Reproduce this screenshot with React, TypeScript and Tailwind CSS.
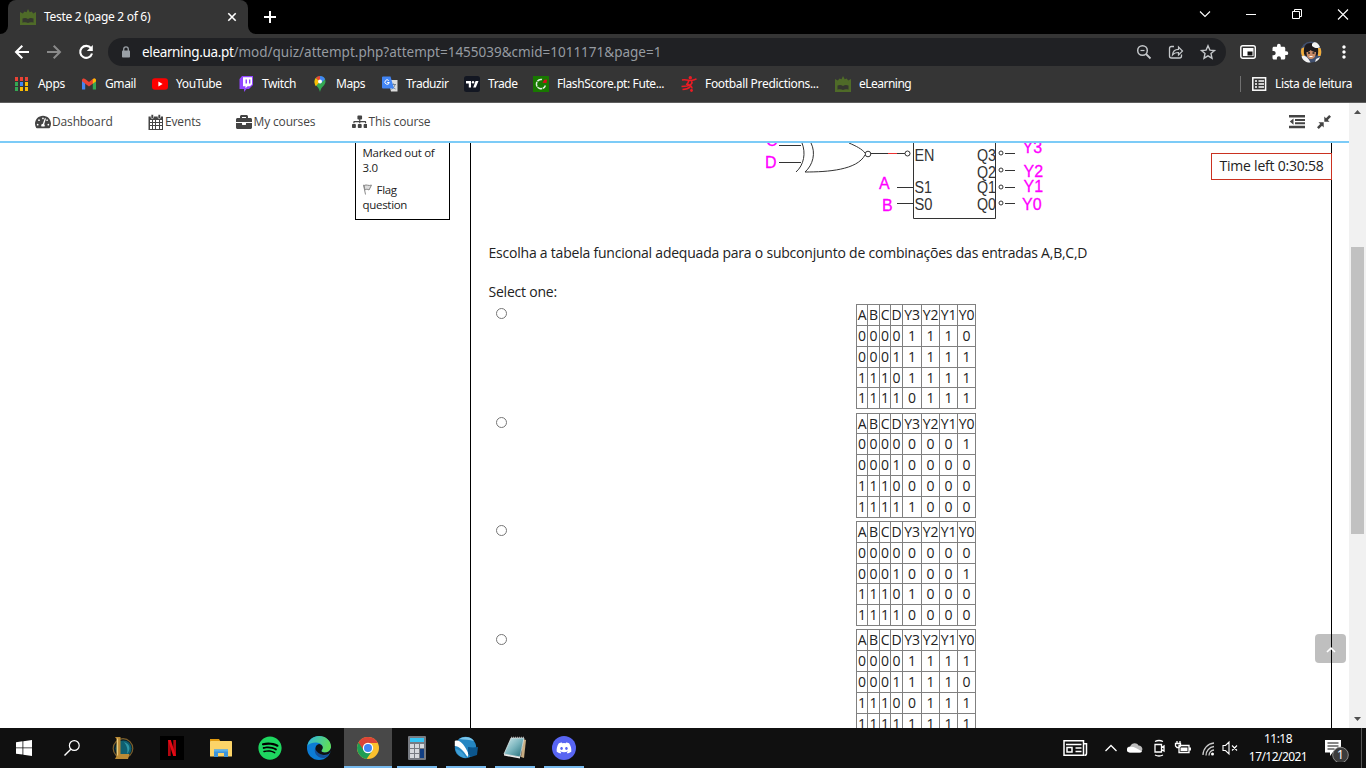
import React from "react";
import {
  FaTachometerAlt,
  FaBriefcase,
  FaSitemap,
  FaSpotify,
  FaDiscord,
} from "react-icons/fa";
import { MdExtension, MdMoreVert } from "react-icons/md";

const UaLogo = () => (
  <svg width="16" height="16" viewBox="0 0 16 16">
    <path d="M0 3l2.800 1.500L4.500 2.500l2 .8L8 0l1.700 3.300 2-.8 1.500 2L16 3v13H0z" fill="#4f6b28" />
    <path d="M2.500 9.500c2-.9 4-.7 5.500.4 1.500-1.100 3.500-1.300 5.500-.4v4.200c-2-.6-4-.5-5.500.3-1.500-.8-3.500-.9-5.500-.3z" fill="#35372f" />
  </svg>
);

const AppsIcon = () => (
  <svg width="16" height="16" viewBox="0 0 16 16" shapeRendering="crispEdges">
    {["#ea4335", "#ea4335", "#ea4335", "#34a853", "#4285f4", "#fbbc04", "#34a853", "#fbbc04", "#fbbc04"].map((c, i) => (
      <rect key={i} x={1 + (i % 3) * 5} y={1 + Math.floor(i / 3) * 5} width="3" height="4" fill={c} />
    ))}
  </svg>
);

const GmailIcon = () => (
  <svg width="16" height="16" viewBox="0 0 16 16">
    <path d="M1 4v9.500h3.200V7z" fill="#4285f4" />
    <path d="M15 4v9.500h-3.200V7z" fill="#34a853" />
    <path d="M1 4.200C1 2.500 3 2 4.200 3L8 6l3.800-3C13 2 15 2.500 15 4.200v1L8 10.500 1 5.200z" fill="#ea4335" />
    <path d="M11.800 3C13 2 15 2.500 15 4.200v1l-3.200 2.500z" fill="#fbbc04" />
  </svg>
);

const YoutubeIcon = () => (
  <svg width="16" height="16" viewBox="0 0 16 16">
    <rect x="0" y="2.300" width="16" height="11.500" rx="3" fill="#f00" />
    <path d="M6.400 5.600v4.900L10.600 8z" fill="#fff" />
  </svg>
);

const TwitchIcon = () => (
  <svg width="16" height="16" viewBox="0 0 16 16">
    <path d="M4 0h11v9l-4 4H8.500L6 16v-3H1.500V3z" fill="#9146ff" />
    <path d="M5 1.200h9v7l-2 2H9.500l-2 2v-2H5z" fill="#fff" />
    <path d="M7.500 3.500H9v4H7.500zM11 3.500h1.400v4H11z" fill="#9146ff" />
  </svg>
);

const MapsIcon = () => (
  <svg width="16" height="16" viewBox="0 0 16 16">
    <path d="M2.500 5.500a5.500 5.500 0 0 1 11 0c0 4-4.500 5-5.500 10.500-1-5.500-5.500-6.500-5.500-10.500z" fill="#34a853" />
    <path d="M2.500 5.500a5.500 5.500 0 0 1 1.300-3.500L8 5.500l-4.200 4.800C3 9 2.500 7.500 2.500 5.500z" fill="#fbbc04" />
    <path d="M3.800 2A5.500 5.500 0 0 1 8 0v5.500z" fill="#ea4335" />
    <path d="M8 0a5.500 5.500 0 0 1 5 3.300L8 8z" fill="#4285f4" />
    <circle cx="8" cy="5.500" r="2" fill="#fff" />
  </svg>
);

const TranslateIcon = () => (
  <svg width="16" height="16" viewBox="0 0 16 16">
    <path d="M6 4h9.500v11.500H9z" fill="#dcdcdc" />
    <path d="M9 8.500h5M11.500 7.500v1M13 8.500c-.5 2.500-2 4-3.500 4.800M10 9c.5 2 2 3.500 3.500 4" stroke="#6b7b8c" strokeWidth=".9" fill="none" />
    <path d="M1 .5h7.500l3.500 12H1A1 1 0 0 1 0 11.500v-10A1 1 0 0 1 1 .5z" fill="#4285f4" />
    <path d="M6.800 4.600A2.200 2.200 0 1 0 7.300 6.500H5.200" stroke="#fff" strokeWidth="1" fill="none" />
  </svg>
);

const TradeIcon = () => (
  <svg width="16" height="16" viewBox="0 0 16 16">
    <rect width="16" height="16" rx="2.500" fill="#131722" />
    <path d="M2 5h5v6.500H4.800V7.500H2zM11.600 5H14.500l-2.700 6.500H9.200z" fill="#fff" />
    <circle cx="9" cy="6.200" r="1.200" fill="#fff" />
  </svg>
);

const FlashIcon = () => (
  <svg width="16" height="16" viewBox="0 0 16 16">
    <rect width="16" height="16" fill="#187800" />
    <path d="M9 3.600A4.600 4.600 0 1 0 12.400 9.500" stroke="#dfeedd" strokeWidth="1.500" fill="none" strokeDasharray="5 .6" />
    <path d="M9.500 6.700l1.800-3 2.700-.2-.5 3.500z" fill="#d80b1b" />
  </svg>
);

const FootballIcon = () => (
  <svg width="16" height="16" viewBox="0 0 16 16">
    <circle cx="9.300" cy="1.700" r="1.700" fill="#ed1c24" />
    <path d="M1 4c4-1 7 .8 9 .5s3-.8 5.500-1.500M7.800 4.500L6.500 8M10.500 4.500c1.500 3-.5 4.500-4.500 5.500M5 8C8 9 11 9 11 12.500M6 10L.5 10.500M1.500 13.500c4 0 6-1 8-3" stroke="#ed1c24" strokeWidth="1.600" fill="none" />
    <circle cx="10.500" cy="14.500" r="1.400" fill="#ed1c24" />
  </svg>
);

const bookmarks = [
  { w: "w-[67px]", label: "Apps", t: "tracking-[-0.300px]", icon: <AppsIcon /> },
  { w: "w-[71px]", label: "Gmail", t: "tracking-[-0.400px]", icon: <GmailIcon /> },
  { w: "w-[86px]", label: "YouTube", t: "tracking-[-0.400px]", icon: <YoutubeIcon /> },
  { w: "w-[74px]", label: "Twitch", t: "tracking-[-0.400px]", icon: <TwitchIcon /> },
  { w: "w-[70px]", label: "Maps", t: "tracking-[-0.400px]", icon: <MapsIcon /> },
  { w: "w-[82px]", label: "Traduzir", t: "tracking-[-0.450px]", icon: <TranslateIcon /> },
  { w: "w-[69px]", label: "Trade", t: "tracking-[-0.400px]", icon: <TradeIcon /> },
  { w: "w-[148px]", label: "FlashScore.pt: Fute...", t: "tracking-[-0.400px]", icon: <FlashIcon /> },
  { w: "w-[154px]", label: "Football Predictions...", t: "tracking-[-0.320px]", icon: <FootballIcon /> },
  { w: "w-[90px]", label: "eLearning", t: "tracking-[-0.520px]", icon: <UaLogo /> },
];

const TabStrip = () => (
  <div className="flex h-[34px] bg-black">
    <div className="flex w-[8px] items-end bg-[#353535]">
      <div className="h-[34px] w-[8px] rounded-br-[8px] bg-black" />
    </div>
    <div className="flex w-[240px] items-center rounded-t-[8px] bg-[#353535] pl-[12px]">
      <UaLogo />
      <span className="ml-[8px] w-[183px] whitespace-nowrap text-[12px] tracking-[-0.300px] text-white">Teste 2 (page 2 of 6)</span>
      <svg width="10" height="10" viewBox="0 0 10 10"><path d="M1.300 1.300l7.400 7.400M8.700 1.300L1.300 8.700" stroke="#fff" strokeWidth="1.600" /></svg>
    </div>
    <div className="h-[34px] w-[8px] bg-[#353535]">
      <div className="h-[34px] w-[8px] rounded-bl-[8px] bg-black" />
    </div>
    <svg className="ml-[8px] mt-[11px]" width="12" height="12" viewBox="0 0 12 12"><path d="M6 0v12M0 6h12" stroke="#fff" strokeWidth="2" /></svg>
    <div className="ml-auto flex w-[172px] items-start pt-[8px]">
      <svg width="172" height="14" viewBox="0 0 172 14" fill="none" stroke="#fff">
        <path d="M6 3.500l5 5 5-5" strokeWidth="1.100" />
        <path d="M52 6.500h10" />
        <path d="M98.500 3.500h7v7h-7zM100.500 3V1.500h7v7H106" />
        <path d="M144 1.500l10 10M154 1.500l-10 10" strokeWidth="1.100" />
      </svg>
    </div>
  </div>
);

const Toolbar = () => (
  <div className="flex h-[36px] items-center bg-[#353535]">
    <svg className="ml-[14px]" width="16" height="16" viewBox="0 0 16 16" fill="none" stroke="#fff" strokeWidth="2">
      <path d="M15 8H2.500M8.300 1.700L2 8l6.300 6.300" />
    </svg>
    <svg className="ml-[16px]" width="16" height="16" viewBox="0 0 16 16" fill="none" stroke="#8a8a8a" strokeWidth="2">
      <path d="M1 8h12.500M7.700 1.700L14 8l-6.300 6.300" />
    </svg>
    <svg className="ml-[16px]" width="16" height="16" viewBox="0 0 16 16" fill="none" stroke="#fff" strokeWidth="2.100">
      <path d="M13 4.200A6 6 0 1 0 14 9.500" />
      <path d="M14.800 1v6h-6z" fill="#fff" stroke="none" />
    </svg>
    <div className="ml-[14px] flex h-[28px] w-[1118px] items-center rounded-full bg-[#202124]">
      <svg className="ml-[13px]" width="10" height="12" viewBox="0 0 10 12">
        <path d="M2.700 5V3.200a2.300 2.300 0 0 1 4.600 0V5" stroke="#9aa0a6" strokeWidth="1.300" fill="none" />
        <rect x="1" y="4.500" width="8" height="7" rx=".8" fill="#9aa0a6" />
      </svg>
      <span className="ml-[11px] whitespace-nowrap text-[13.500px] text-[#969ba1]">
        <span className="tracking-[-0.350px] text-white">elearning.ua.pt</span>/mod/quiz/attempt.php?attempt=1455039&amp;cmid=1011171&amp;page=1
      </span>
      <svg className="ml-auto mr-[9px]" width="82" height="20" viewBox="0 0 82 20" fill="none" stroke="#c4c7ca" strokeWidth="1.500">
        <circle cx="7.500" cy="8.500" r="4.800" /><path d="M11 12l4.500 4.500" strokeWidth="1.800" /><path d="M5.500 8.500h4" strokeWidth="1.200" />
        <path d="M39 4.500h-2.500a2 2 0 0 0-2 2v7.500a2 2 0 0 0 2 2h8a2 2 0 0 0 2-2v-1.500" strokeWidth="1.300" />
        <path d="M37.500 13c.3-3.500 2.500-5.700 6-5.700V5l4 4-4 4v-2.500c-2.500 0-4.500.5-6 2.500z" strokeWidth="1.200" />
        <path d="M73 3.800l1.900 4.300 4.600.4-3.500 3.100 1 4.600-4-2.400-4 2.400 1-4.600-3.500-3.100 4.600-.4z" strokeWidth="1.400" />
      </svg>
    </div>
    <svg className="ml-[14px]" width="17" height="16" viewBox="0 0 17 16">
      <rect x=".8" y="1.800" width="14.500" height="12.500" rx="2" stroke="#fff" strokeWidth="1.400" fill="none" />
      <path d="M3 4h10.500v8H3z" fill="#fff" /><path d="M7.500 7.500h5v4h-5z" fill="#111" />
    </svg>
    <MdExtension className="ml-[14px]" size={18} color="#fff" />
    <svg className="ml-[11px]" width="22" height="22" viewBox="0 0 22 22">
      <circle cx="11" cy="11" r="10.500" fill="#41506e" />
      <path d="M1.500 7.500l3-1.500v10H2.500A11 11 0 0 1 1.500 7.500zM18 7h2.500a11 11 0 0 1 0 8H18z" fill="#f1ad3c" />
      <path d="M4 13C3 5 6 2 11 2s8 3 7 11l-2 2H6z" fill="#1c191c" />
      <path d="M6.500 11c2 0 3-.5 4-2 2 1.500 3.500 2 5.500 2 0 4.500-2 7-5 7s-4.500-2.500-4.500-7z" fill="#c98b66" />
      <path d="M1.500 15.500c3-2 6 0 9 6C7 22 3 20 1.500 15.500zM12 3c2-3 6-2 8 3-2 2-6 1-8-1zM16 18l4-2c-1 3-3 4-5 5z" fill="#f2f2f2" />
      <path d="M8 12h2M12.500 12h2" stroke="#222" strokeWidth="1.500" />
      <path d="M9.500 15.500h3" stroke="#fff" />
    </svg>
    <MdMoreVert className="ml-[12px]" size={20} color="#fff" />
  </div>
);

const BookmarksBar = () => (
  <div className="flex h-[33px] items-center border-b border-[#5e5e5e] bg-[#353535] pb-[4px] pl-[14px]">
    {bookmarks.map((b) => (
      <div key={b.label} className={`flex shrink-0 items-center gap-[8px] ${b.w}`}>
        <span className="shrink-0">{b.icon}</span>
        <span className={`whitespace-nowrap text-[12px] leading-[16px] text-white ${b.t}`}>{b.label}</span>
      </div>
    ))}
    <div className="ml-auto flex h-[16px] items-center border-l border-[#707070] pl-[11px] pr-[14px]">
      <svg width="15" height="14" viewBox="0 0 15 14">
        <rect x=".8" y=".8" width="12.800" height="12.400" fill="none" stroke="#fff" strokeWidth="1.500" />
        <path d="M3 4h2M3 7h2M3 10h2M6.500 4h5.500M6.500 7h5.500M6.500 10h5.500" stroke="#fff" strokeWidth="1.500" />
      </svg>
      <span className="ml-[8px] w-[77px] whitespace-nowrap text-[12px] tracking-[-0.350px] text-white">Lista de leitura</span>
    </div>
  </div>
);

const CalendarIcon = () => (
  <svg width="16" height="16" viewBox="0 0 16 16">
    <path d="M.5 2.500h14.500V16H.5z" fill="#444" />
    <path d="M2 6h2v2H2zM5 6h2v2H5zM8 6h3v2H8zM12 6h2v2h-2zM2 9h2v2H2zM5 9h2v2H5zM8 9h3v2H8zM12 9h2v2h-2zM2 12h2v3H2zM5 12h2v3H5zM8 12h3v3H8zM12 12h2v3h-2z" fill="#fff" />
    <rect x="3" y=".5" width="2.500" height="4" rx="1" fill="#444" stroke="#fff" strokeWidth=".6" />
    <rect x="10" y=".5" width="2.500" height="4" rx="1" fill="#444" stroke="#fff" strokeWidth=".6" />
  </svg>
);

const NavItem = ({ w, icon, label }: { w: string; icon: React.ReactNode; label: string }) => (
  <div className={`flex shrink-0 items-center gap-[1.500px] ${w}`}>
    {icon}
    <span className="whitespace-nowrap">{label}</span>
  </div>
);

const SiteNav = () => (
  <div className="flex h-[40px] shrink-0 items-center border-b-2 border-[#7ccbf7] pl-[34.500px] text-[12px] tracking-[-0.150px] text-[#444]">
    <NavItem w="w-[113px]" icon={<FaTachometerAlt size={16} color="#444" />} label="Dashboard" />
    <NavItem w="w-[88.500px]" icon={<CalendarIcon />} label="Events" />
    <NavItem w="w-[115.500px]" icon={<FaBriefcase size={16} color="#444" />} label="My courses" />
    <NavItem w="w-[100px]" icon={<FaSitemap size={15.5} color="#444" />} label="This course" />
    <svg className="ml-auto" width="16" height="14" viewBox="0 0 16 14"><path d="M0 0h16v2.400H0zM6 3.900h10v2H6zM6 7.300h10v2H6zM0 10.700h16v2.500H0zM4.500 3.500v6.200L.8 6.600z" fill="#444" /></svg>
    <svg className="ml-[12px] mr-[18px]" width="14" height="14" viewBox="0 0 14 14">
      <path d="M7.300 6.700V1.500l1.700 1.700L12.200 0 14 1.800 10.800 5l1.700 1.700zM6.700 7.300v5.200L5 10.800 1.800 14 0 12.200 3.200 9 1.500 7.300z" fill="#444" />
    </svg>
  </div>
);

const Circuit = () => (
  <svg width="290" height="78" viewBox="760 143 290 78" fontFamily="Liberation Sans, sans-serif" className="ml-[289px] block">
    <g stroke="#333" fill="none" strokeWidth="1">
      <path d="M779 145.500h22M779 162.500h22" />
      <path d="M802 143c4 10 2 22-6 29M811 143c5 10 2 22-6 29 23 0 52-2 60-17M849 143c7 3 13 6 16 10" />
      <circle cx="868" cy="154" r="2.800" /><circle cx="907.500" cy="153.500" r="2.500" />
      <path d="M871 153.500h17M897 153.500h8M897 187.500h16M897 203.500h16M913.500 143v75.500h82V143" />
      {[153.5, 170.5, 187.5, 203.5].map((y) => (
        <g key={y}><circle cx="1001" cy={y - 0.5} r="2" /><path d={`M1005 ${y}h10`} /></g>
      ))}
    </g>
    <path d="M888 153.500h9" stroke="#e33" />
    <g fill="#333" fontSize="16">
      <text x="914.500" y="161" textLength="20" lengthAdjust="spacingAndGlyphs">EN</text>
      <text x="914.500" y="193" textLength="17.500" lengthAdjust="spacingAndGlyphs">S1</text>
      <text x="914.500" y="210" textLength="18" lengthAdjust="spacingAndGlyphs">S0</text>
      <text x="977" y="161" textLength="19" lengthAdjust="spacingAndGlyphs">Q3</text>
      <text x="977" y="178" textLength="19" lengthAdjust="spacingAndGlyphs">Q2</text>
      <text x="977" y="193" textLength="19" lengthAdjust="spacingAndGlyphs">Q1</text>
      <text x="977" y="210" textLength="19" lengthAdjust="spacingAndGlyphs">Q0</text>
    </g>
    <g fill="#f0f" stroke="#f0f" strokeWidth=".3" fontSize="16">
      <text x="766" y="146">C</text>
      <text x="765" y="168">D</text>
      <text x="879" y="189">A</text>
      <text x="882" y="211">B</text>
      <text x="1022.500" y="152.500">Y3</text>
      <text x="1023.500" y="177">Y2</text>
      <text x="1023.500" y="192">Y1</text>
      <text x="1022" y="210">Y0</text>
    </g>
  </svg>
);

const headers = ["A", "B", "C", "D", "Y3", "Y2", "Y1", "Y0"];
const options = [
  { box: "h-[109px]", radio: "mt-[4px]", rows: "grid-rows-[21px_21px_21px_20px_22px]", data: ["00001110", "00011111", "11101111", "11110111"] },
  { box: "h-[108px]", radio: "mt-[4px]", rows: "grid-rows-[20px_21px_21px_21px_22px]", data: ["00000001", "00010000", "11100000", "11111000"] },
  { box: "h-[108px]", radio: "mt-[4px]", rows: "grid-rows-[21px_21px_20px_21px_22px]", data: ["00000000", "00010001", "11101000", "11110000"] },
  { box: "h-[108px]", radio: "mt-[5px]", rows: "grid-rows-[21px_21px_21px_21px_22px]", data: ["00001111", "00011110", "11100111", "11111111"] },
];

const TruthTable = ({ rows, data }: { rows: string; data: string[] }) => (
  <div className={`grid grid-cols-[11px_12px_11px_12px_19px_18px_18px_19px] text-center text-[14px] leading-[20px] text-[#222] ${rows}`}>
    {[headers, ...data.map((d) => d.split(""))].map((cells, r) =>
      cells.map((c, i) => (
        <div
          key={`${r}-${i}`}
          className={`flex items-center justify-center border-l border-t border-[#808080] tracking-[-0.200px] ${i === 7 ? "border-r" : ""} ${r === 4 ? "border-b" : ""}`}
        >
          {c}
        </div>
      ))
    )}
  </div>
);

const Question = () => (
  <div className="w-[862px] shrink-0 overflow-hidden border-x border-black">
    <Circuit />
    <div className="pl-[17.500px] text-[14px] leading-[20px] tracking-[-0.220px] text-[#222]">
      <p className="mt-[22px] whitespace-nowrap">Escolha a tabela funcional adequada para o subconjunto de combinações das entradas A,B,C,D</p>
      <p className="mt-[19px]">Select one:</p>
    </div>
    <div className="mt-[2px] flex flex-col">
      {options.map((o, i) => (
        <div key={i} className={`flex shrink-0 items-start pl-[25px] ${o.box}`}>
          <span className={`mr-[349px] h-[11px] w-[11px] shrink-0 rounded-full border border-[#767676] bg-white ${o.radio}`} />
          <TruthTable rows={o.rows} data={o.data} />
        </div>
      ))}
    </div>
  </div>
);

const Content = () => (
  <div className="relative flex min-h-0 flex-1 overflow-hidden">
    <div className="ml-[355px] mr-[20px] h-[77px] w-[95px] shrink-0 border border-t-0 border-black pl-[6.500px] text-[11.500px] leading-[15px] tracking-[-0.300px] text-[#222]">
      <p className="mt-[2px] whitespace-nowrap">Marked out of<br />3.0</p>
      <p className="mt-[7px]">
        <svg className="mr-[5px] inline-block align-[-1px]" width="9" height="11" viewBox="0 0 9 11"><path d="M.5 .8L2.500 10.500M1 1.500c3-1.500 4 .8 7.500-.4L6 6C4.500 5 3 5 2 6z" stroke="#888" fill="#ddd" strokeWidth="1" /></svg>
        Flag<br />question
      </p>
    </div>
    <Question />
    <div className="absolute left-[1211px] top-[10px] h-[27px] w-[121px] border border-[#ca3120] bg-white pl-[7.500px] text-[14px] leading-[24px] tracking-[-0.220px] text-[#222]">
      <span className="whitespace-nowrap">Time left 0:30:58</span>
    </div>
    <div className="absolute left-[1315px] top-[491px] flex h-[29px] w-[31px] items-center justify-center rounded-[4px] bg-black/25 pt-[3px]">
      <svg width="10" height="6" viewBox="0 0 10 6"><path d="M1 5l4-3.800L9 5" stroke="#fff" strokeWidth="1.700" fill="none" /></svg>
    </div>
  </div>
);

const Scrollbar = () => (
  <div className="flex w-[17px] shrink-0 flex-col items-center bg-[#f1f1f1]">
    <svg className="mt-[7px]" width="7" height="4" viewBox="0 0 7 4"><path d="M0 4h7L3.500 0z" fill="#505050" /></svg>
    <div className="mt-[133px] h-[287px] w-[13px] bg-[#c1c1c1]" />
    <svg className="mb-[7px] mt-auto" width="7" height="4" viewBox="0 0 7 4"><path d="M0 0h7L3.500 4z" fill="#505050" /></svg>
  </div>
);

const taskIcons: { icon: React.ReactNode; line?: boolean; active?: boolean }[] = [
  { icon: <svg width="16" height="16" viewBox="0 0 16 16"><path d="M0 2.200l6.500-.9v6.200H0zM7.300 1.200L16 0v7.500H7.300zM0 8.300h6.500v6.300L0 13.700zM7.300 8.300H16V16l-8.700-1.200z" fill="#fff" /></svg> },
  { icon: <svg className="mr-[2px]" width="16" height="16" viewBox="0 0 16 16"><circle cx="10.300" cy="5.500" r="4.900" fill="none" stroke="#fff" strokeWidth="1.200" /><path d="M6.800 9.200L.5 15.500" stroke="#fff" strokeWidth="1.400" /></svg> },
  {
    icon: (
      <svg width="24" height="24" viewBox="0 0 24 24">
        <circle cx="12" cy="12.500" r="9.800" fill="#0b1f29" stroke="#7d5f2b" strokeWidth="1.200" />
        <circle cx="12.500" cy="12.500" r="8" fill="#0f5f70" /><path d="M13 6c6 2 7 7 3 12 1-5 0-8-3-12z" fill="#2f97a6" />
        <path d="M4 1h5.500v17h9L17 23H4l1.500-3V3z" fill="#b98a35" /><path d="M6.500 2.500v17" stroke="#e8c97c" strokeWidth="1.200" />
      </svg>
    ),
  },
  {
    icon: (
      <svg width="24" height="24" viewBox="0 0 24 24">
        <rect width="24" height="24" fill="#000" /><path d="M8 4h2.700v16H8zM13.300 4H16v16h-2.700z" fill="#b1060f" /><path d="M8 4h2.800L16 20h-2.800z" fill="#e50914" />
      </svg>
    ),
  },
  {
    icon: (
      <svg width="24" height="24" viewBox="0 0 24 24">
        <path d="M1 3h9l1.500 2.500H1z" fill="#e09a10" /><rect x="1" y="5" width="22" height="15.500" rx=".6" fill="#fcd468" />
        <path d="M5 21v-7.500h14V21h-4v-4H9v4z" fill="#3d94d9" /><path d="M5 13.500h14v2H5z" fill="#58b0ec" />
      </svg>
    ),
  },
  { icon: <span className="flex h-[22px] w-[22px] items-center justify-center rounded-full bg-black"><FaSpotify size={24} color="#1ed760" className="shrink-0" /></span> },
  {
    icon: (
      <svg width="24" height="24" viewBox="0 0 24 24">
        <defs>
          <linearGradient id="eg" x1="0" y1="0" x2="1" y2=".3"><stop offset="0" stopColor="#2fb4e4" /><stop offset="1" stopColor="#5fdc5a" /></linearGradient>
        </defs>
        <circle cx="12" cy="12" r="12" fill="#0c7cd5" />
        <path d="M.3 10C1.500 3.500 6.500 0 12 0c7 0 12 5 12 10.500 0 4-3 6-6 6-2.500 0-4.500-1-3-2.800C17 11 14.500 6.500 9 6.500 5 6.500 1.500 8 .3 10z" fill="url(#eg)" />
        <path d="M8.500 11.500C6 16 10 22.500 17 22c2-.5 4-2 5.300-4-6 3-11.500.5-13.800-6.500z" fill="#174f96" />
        <path d="M15 13.700c2-2.500 0-5.400-3-5.700-2.500.5-3.700 2.500-3.500 5 .7 2.500 3.500 5.500 8.500 6 3 0 5-1 5.800-2.300L24 15v-3c-1 3-3.500 4.500-6 4.500s-4.500-1.100-3-2.800z" fill="#111" />
      </svg>
    ),
  },
  {
    active: true,
    icon: (
      <svg width="24" height="24" viewBox="0 0 24 24">
        <circle cx="12" cy="12" r="11" fill="#fbc02d" />
        <path d="M12 12L2.500 6.500A11 11 0 0 0 10.500 22.900L16.500 14.500z" fill="#1f9d54" />
        <path d="M2.500 6.500A11 11 0 0 1 21.800 7H12a5 5 0 0 0-4.500 7z" fill="#db4437" />
        <circle cx="12" cy="12" r="5.200" fill="#fff" /><circle cx="12" cy="12" r="4" fill="#4285f4" />
      </svg>
    ),
  },
  {
    line: true,
    icon: (
      <svg width="24" height="24" viewBox="0 0 24 24">
        <rect x="3" y="0" width="18" height="24" rx="1" fill="#777b82" /><rect x="5" y="2" width="14" height="4" fill="#35c5f5" />
        {[0, 1, 2].map((r) => [0, 1, 2].map((c) => <rect key={`${r}${c}`} x={5 + c * 5} y={8 + r * 5} width="4" height="4" fill={c === 2 && r > 0 ? "#123f83" : "#d6d9dd"} />))}
        <path d="M15 13h4v9h-4z" fill="#123f83" />
      </svg>
    ),
  },
  {
    line: true,
    icon: (
      <svg width="24" height="24" viewBox="0 0 24 24">
        <circle cx="11.500" cy="11.500" r="10.700" fill="#2586c2" /><path d="M5 3C10-.5 17 .5 20 5c-4-1-10-1.500-15-2z" fill="#79c4ea" />
        <path d="M.8 5c5-2 10 4 13.700 13l-1 3C9 14 5 10 .8 10z" fill="#fff" />
        <path d="M1.500 13c4 .5 8 4 10.500 9C6 21.500 2.500 18 1.500 13z" fill="#3f9fd6" />
        <path d="M14 11l5 .5 5-.5-1 8-6 2-3-3z" fill="#0c568e" />
      </svg>
    ),
  },
  {
    line: true,
    icon: (
      <svg width="24" height="24" viewBox="0 0 24 24">
        <defs><linearGradient id="np" x1="0" y1="0" x2="1" y2="1"><stop offset="0" stopColor="#d6edef" /><stop offset=".5" stopColor="#79b4bd" /><stop offset="1" stopColor="#1d6874" /></linearGradient></defs>
        <path d="M20 3l3 1-2 18-3-1z" fill="#c8ad83" /><path d="M8 2h13l-4 19-16-3z" fill="url(#np)" stroke="#e8eeee" strokeWidth=".7" />
        <path d="M1 18l16 3v1.500L1 19.500z" fill="#eee" /><path d="M8 1.500h13" stroke="#aaa" strokeWidth="1.500" strokeDasharray="1 1" />
      </svg>
    ),
  },
  { line: true, icon: <span className="flex h-[24px] w-[24px] items-center justify-center rounded-full bg-[#5865f2]"><FaDiscord size={16} color="#fff" /></span> },
];

const Taskbar = () => (
  <div className="flex h-[40px] shrink-0 bg-[#101010] text-white">
    <div className="flex gap-[1px]">
      {taskIcons.map((t, i) => (
        <div key={i} className={`flex h-[40px] flex-col items-center ${i === 1 ? "mr-[2px] w-[47px]" : "w-[48px]"} ${t.active ? "bg-[#484848]" : ""}`}>
          <div className="flex h-[38px] items-center pt-[2px]">{t.icon}</div>
          {(t.line || t.active) && <div className={`h-[2px] bg-[#76b9ed] ${t.active ? "w-[48px]" : "w-[40px]"}`} />}
        </div>
      ))}
    </div>
    <div className="ml-auto flex h-[40px] items-center">
      <svg width="180" height="24" viewBox="1062 736 180 24" fill="none" stroke="#fff" strokeWidth="1.300">
        <path d="M1064 740.700h19.500v14.600H1064zM1083.500 743.700h3v9.500c0 1.500-.8 2.100-2 2.100M1066 744.500h15.500M1075.500 748h6M1075.500 751.500h6M1067 747.500h5v4.500h-5z" strokeWidth="1.500" />
        <path d="M1105.500 751l5.500-5.500 5.500 5.500" />
        <path d="M1130 752.500a3 3 0 0 1 0-6c1.500-4 7-4.500 8.500-1 4.500 0 5.500 6 1 7z" fill="#bdbdbd" stroke="none" />
        <path d="M1128 747.500c4-2 7-.5 14 4a2 2 0 0 1-2 1h-10c-3 0-4-3-2-5z" fill="#fff" stroke="none" />
        <path d="M1155 744.500h6.500v7.500h-6.500zM1161.500 747.500l2.500-1.500v5l-2.500-1.500M1155 741.500q4-2 8 0M1155 755q4 2 8 0" />
        <path d="M1179 745.500h10v7h-10zM1190.300 747.500v3M1177 741v2M1180 741v2M1175.500 743.500h5v2.500l-1.500 1.500h-2l-1.500-1.500z" />
        <path d="M1180.500 747.500h7v3.500h-7z" fill="#fff" stroke="none" />
        <path d="M1203 755a12 12 0 0 1 11-12M1206 755.500a9 9 0 0 1 8-9M1209 755.500a5.500 5.500 0 0 1 5-5.500" stroke="#ccc" />
        <circle cx="1212.500" cy="754" r="1.500" fill="#fff" stroke="none" />
        <path d="M1223 745.500h2.500l3.500-3.500v12l-3.500-3.500h-2.500zM1232 745.500l5 5M1237 745.500l-5 5" strokeWidth="1.100" />
      </svg>
      <div className="ml-[6px] flex w-[60px] flex-col items-center whitespace-nowrap text-[12px] leading-[18px] tracking-[-0.550px]">
        <span>11:18</span>
        <span>17/12/2021</span>
      </div>
      <svg className="ml-[14px]" width="30" height="28" viewBox="0 0 30 28">
        <path d="M3 6h16v12.500h-8.500L8 22v-3.500H3z" fill="#fff" /><path d="M5.500 9h11M5.500 12h11M5.500 15h7" stroke="#111" strokeWidth="1.200" />
        <circle cx="18.500" cy="21" r="7.800" fill="#3c3c3c" stroke="#8a8a8a" strokeWidth="1" />
        <text x="18.500" y="25.300" textAnchor="middle" fontSize="12" fill="#fff" fontFamily="Noto Sans, sans-serif">1</text>
      </svg>
      <div className="ml-[9px] h-[40px] w-[5px] border-l border-[#555]" />
    </div>
  </div>
);

export default function App() {
  return (
    <div className="flex h-[768px] w-[1366px] flex-col overflow-hidden bg-white font-['Noto_Sans',sans-serif]">
      <TabStrip />
      <Toolbar />
      <BookmarksBar />
      <div className="flex min-h-0 flex-1 font-['Open_Sans',sans-serif]">
        <div className="flex min-w-0 flex-1 flex-col">
          <SiteNav />
          <Content />
        </div>
        <Scrollbar />
      </div>
      <Taskbar />
    </div>
  );
}
